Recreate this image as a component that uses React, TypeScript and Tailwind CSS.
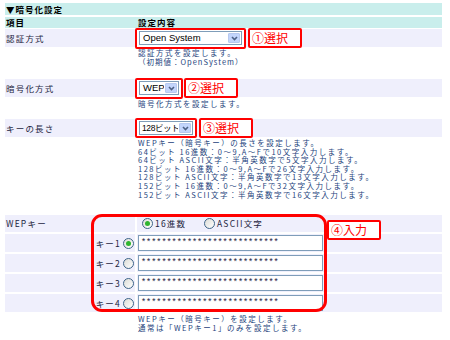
import React from "react";

const JP = '"Noto Sans CJK JP", "Noto Sans", sans-serif';

function Select({ value, width, small }: { value: string; width: number; small?: boolean }) {
  return (
    <div
      className="flex h-[14px] items-center overflow-hidden border border-[#7f9db9] bg-white"
      style={{ width }}
    >
      <span
        className={`flex-1 overflow-hidden whitespace-nowrap leading-[12px] text-black ${small ? "pl-[2px] text-[8.5px] tracking-[-0.4px]" : "pl-[3px] text-[9.5px]"}`}
        style={{ fontFamily: '"Liberation Sans", "Noto Sans CJK JP", sans-serif' }}
      >
        {value}
      </span>
      <span className="m-[1px] flex h-[10px] w-[12px] shrink-0 items-center justify-center rounded-[1px] border border-[#b7c9ef] bg-[#c3d5fc]">
        <svg width="7" height="5" viewBox="0 0 7 5">
          <path d="M1 1 L3.5 3.5 L6 1" stroke="#4d6185" strokeWidth="1.6" fill="none" />
        </svg>
      </span>
    </div>
  );
}

function Callout({ text }: { text: string }) {
  return (
    <div className="flex h-[20px] w-[54px] shrink-0 items-center rounded-[2px] border-2 border-[#ff0000] bg-white pl-[2px] text-[12px] leading-none text-[#ff0000]">
      {text}
    </div>
  );
}

function Radio({ on }: { on?: boolean }) {
  return (
    <span className="flex h-[11px] w-[11px] shrink-0 items-center justify-center rounded-full border border-[#3e6488] bg-gradient-to-br from-[#dcdcd6] to-white">
      {on && <span className="h-[5px] w-[5px] rounded-full bg-[#2fb52f]" />}
    </span>
  );
}

const label = "text-[8.5px] tracking-[1.2px] text-[#1c2440] whitespace-nowrap";
const desc = "text-[7.5px] leading-[8.6px] tracking-[1.5px] text-[#243f7c] whitespace-nowrap";
const stars = "***************************";

export default function App() {
  return (
    <div className="h-[340px] w-[450px] overflow-hidden bg-white pl-[5px] pt-[3px]" style={{ fontFamily: JP }}>
      <div className="flex w-[437px] flex-col">
        <div className="flex h-[12px] items-center bg-[#c9eeec] pl-[1px] text-[8.5px] font-bold tracking-[1px] text-black">
          ▼暗号化設定
        </div>
        <div className="mt-[2px] flex h-[11px] items-center bg-[#c9eeec] text-[8.5px] font-bold tracking-[1px] text-black">
          <span className="w-[133px] pl-[1px]">項目</span>
          <span>設定内容</span>
        </div>

        {/* 認証方式 */}
        <div className="mt-[1px] flex h-[18px] gap-[2px]">
          <div className={`flex w-[130px] items-center bg-[#efeffc] pl-[1px] ${label}`}>認証方式</div>
          <div className="flex flex-1 items-center gap-[2px] bg-[#efeffc]">
            <div className="-ml-[2px] flex h-[21px] items-center rounded-[2px] border-2 border-[#ff0000] bg-white px-[2px]">
              <Select value="Open System" width={103} />
            </div>
            <Callout text="①選択" />
          </div>
        </div>
        <div className={`h-[32px] pl-[133px] pt-[2px] ${desc}`}>
          <div>認証方式を設定します。</div>
          <div className="tracking-[1px]">（初期値：OpenSystem）</div>
        </div>

        {/* 暗号化方式 */}
        <div className="flex h-[18px] gap-[2px]">
          <div className={`flex w-[130px] items-center bg-[#efeffc] pl-[1px] ${label}`}>暗号化方式</div>
          <div className="flex flex-1 items-center gap-[1px] bg-[#efeffc]">
            <div className="-ml-[2px] flex h-[21px] items-center rounded-[2px] border-2 border-[#ff0000] bg-white px-[2px]">
              <Select value="WEP" width={40} />
            </div>
            <Callout text="②選択" />
          </div>
        </div>
        <div className={`h-[22px] pl-[133px] pt-[3px] ${desc}`}>
          <div>暗号化方式を設定します。</div>
        </div>

        {/* キーの長さ */}
        <div className="flex h-[18px] gap-[2px]">
          <div className={`flex w-[130px] items-center bg-[#efeffc] pl-[1px] ${label}`}>キーの長さ</div>
          <div className="flex flex-1 items-center gap-[2px] bg-[#efeffc]">
            <div className="-ml-[2px] flex h-[20px] items-center rounded-[2px] border-2 border-[#ff0000] bg-white px-[2px]">
              <Select value="128ビット" width={54} small />
            </div>
            <Callout text="③選択" />
          </div>
        </div>
        <div className={`h-[78px] pl-[133px] pt-[2px] ${desc}`}>
          <div>WEPキー（暗号キー）の長さを設定します。</div>
          <div>64ビット 16進数：0～9,A～Fで10文字入力します。</div>
          <div>64ビット ASCII文字：半角英数字で5文字入力します。</div>
          <div>128ビット 16進数：0～9,A～Fで26文字入力します。</div>
          <div>128ビット ASCII文字：半角英数字で13文字入力します。</div>
          <div>152ビット 16進数：0～9,A～Fで32文字入力します。</div>
          <div>152ビット ASCII文字：半角英数字で16文字入力します。</div>
        </div>

        {/* WEPキー */}
        <div className="relative flex flex-col gap-[2px]">
          <div className="flex h-[17px] gap-[2px]">
            <div className={`w-[130px] bg-[#efeffc] pl-[1px] pt-[2px] ${label}`}>WEPキー</div>
            <div className={`flex flex-1 items-center bg-[#efeffc] pl-[5px] ${label}`}>
              <Radio on />
              <span className="ml-[2px] w-[49px]">16進数</span>
              <Radio />
              <span className="ml-[2px]">ASCII文字</span>
            </div>
          </div>
          {[1, 2, 3, 4].map((n) => (
            <div key={n} className="flex h-[18px] gap-[2px]">
              <div className={`flex w-[130px] items-center justify-end gap-[2px] bg-[#efeffc] pr-[1px] ${label}`}>
                <span>キー{n}</span>
                <Radio on={n === 1} />
              </div>
              <div className="flex flex-1 items-center bg-[#efeffc] pl-[1px]">
                <div
                  className="flex h-[16px] w-[185px] items-center border border-[#7f9db9] bg-white pl-[2px] text-[8.5px] leading-none text-[#1c2440]"
                  style={{ fontFamily: '"Liberation Mono", monospace' }}
                >
                  {stars}
                </div>
              </div>
            </div>
          ))}
          <div className={`pl-[133px] pt-[1px] ${desc}`}>
            <div>WEPキー（暗号キー）を設定します。</div>
            <div>通常は「WEPキー1」のみを設定します。</div>
          </div>

          <div className="pointer-events-none absolute left-[86px] top-[-1px] h-[98px] w-[236px] rounded-[11px] border-[3px] border-[#ff0000]" />
          <div className="absolute left-[322px] top-[5px]">
            <Callout text="④入力" />
          </div>
        </div>
      </div>
    </div>
  );
}
